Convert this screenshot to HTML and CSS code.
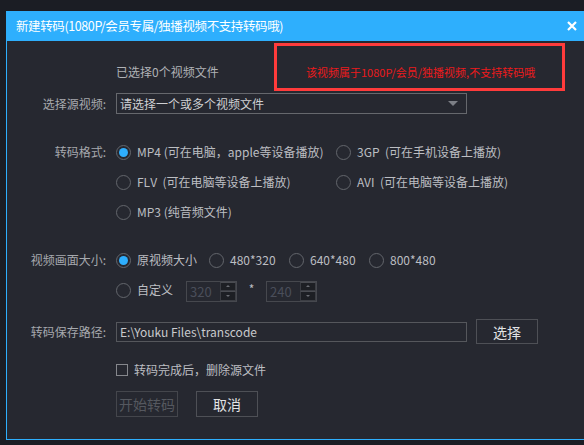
FILE: index.html
```html
<!DOCTYPE html>
<html lang="zh-CN">
<head>
<meta charset="utf-8">
<title>新建转码</title>
<link rel="stylesheet" href="styles.css">
</head>
<body>
<div class="screen">
  <div class="dialog">
    <div class="titlebar">
      <span class="title">新建转码(1080P/会员专属/独播视频不支持转码哦)</span>
      <svg class="close" width="10" height="10" viewBox="0 0 10 10"><path d="M1 1L9 9M9 1L1 9" stroke="#fff" stroke-width="2.2" fill="none"/></svg>
    </div>
    <div class="body">
      <div class="field row-top">
        <div class="label"></div>
        <div class="top-line">
          <div class="count">已选择0个视频文件</div>
          <div class="warning">该视频属于1080P/会员/独播视频,不支持转码哦</div>
        </div>
      </div>

      <div class="field row-source">
        <div class="label">选择源视频:</div>
        <div class="select">
          <span class="select-text">请选择一个或多个视频文件</span>
          <span class="caret"></span>
        </div>
      </div>

      <div class="field row-format">
        <div class="label label-first">转码格式:</div>
        <div class="format-grid">
          <div class="opt"><span class="radio on"></span><span>MP4 (可在电脑，apple等设备播放)</span></div>
          <div class="opt"><span class="radio"></span><span>3GP&nbsp; (可在手机设备上播放)</span></div>
          <div class="opt"><span class="radio"></span><span>FLV&nbsp; (可在电脑等设备上播放)</span></div>
          <div class="opt"><span class="radio"></span><span>AVI&nbsp; (可在电脑等设备上播放)</span></div>
          <div class="opt"><span class="radio"></span><span>MP3 (纯音频文件)</span></div>
        </div>
      </div>

      <div class="field row-size">
        <div class="label label-first">视频画面大小:</div>
        <div class="size-rows">
          <div class="size-line">
            <div class="opt w93"><span class="radio on"></span><span>原视频大小</span></div>
            <div class="opt w80"><span class="radio"></span><span>480*320</span></div>
            <div class="opt w80"><span class="radio"></span><span>640*480</span></div>
            <div class="opt"><span class="radio"></span><span>800*480</span></div>
          </div>
          <div class="size-line">
            <div class="opt custom"><span class="radio"></span><span>自定义</span></div>
            <div class="spin">
              <span class="spin-val">320</span>
              <span class="spin-btns"><span class="spin-btn up"></span><span class="spin-btn down"></span></span>
            </div>
            <span class="star">*</span>
            <div class="spin">
              <span class="spin-val">240</span>
              <span class="spin-btns"><span class="spin-btn up"></span><span class="spin-btn down"></span></span>
            </div>
          </div>
        </div>
      </div>

      <div class="field row-path">
        <div class="label">转码保存路径:</div>
        <div class="path-line">
          <div class="input">E:\Youku Files\transcode</div>
          <div class="btn">选择</div>
        </div>
      </div>

      <div class="field row-check">
        <div class="label"></div>
        <div class="check-line"><span class="checkbox"></span><span>转码完成后，删除源文件</span></div>
      </div>

      <div class="field row-buttons">
        <div class="label"></div>
        <div class="button-line">
          <div class="btn disabled">开始转码</div>
          <div class="btn">取消</div>
        </div>
      </div>
    </div>
  </div>
</div>
</body>
</html>
```

FILE: styles.css
```css
html, body {
  margin: 0;
  padding: 0;
}
body {
  width: 584px;
  height: 445px;
  overflow: hidden;
  background: #1b1d24;
  font-family: "Noto Sans CJK SC", "Noto Sans", sans-serif;
}
.screen {
  padding: 11px 0 0 6px;
}
.dialog {
  width: 580px;
  box-sizing: border-box;
  border: 1px solid #2eaffd;
  background: #262830;
}
.titlebar {
  height: 29px;
  background: #2eaffd;
  display: flex;
  align-items: center;
  justify-content: space-between;
  padding: 0 8px 0 9px;
}
.title {
  color: #ffffff;
  font-size: 12.5px;
  line-height: 16px;
  letter-spacing: -0.4px;
  margin-top: -2px;
}
.close {
  display: block;
  margin-top: -2px;
}
.body {
  height: 398px;
  display: flex;
  flex-direction: column;
}
.field {
  display: grid;
  grid-template-columns: 100px 1fr;
  column-gap: 9px;
}
.label {
  text-align: right;
  padding-right: 1px;
  color: #a6a9ae;
  font-size: 12px;
  line-height: 16px;
  align-self: center;
}
.label-first {
  align-self: start;
  margin-top: 7px;
}

/* top row */
.row-top {
  margin-top: 2px;
  height: 48px;
}
.top-line {
  display: flex;
  align-items: flex-start;
}
.count {
  width: 158px;
  margin-top: 21px;
  color: #b0b2b6;
  font-size: 12px;
  line-height: 16px;
}
.warning {
  width: 291px;
  height: 48px;
  box-sizing: border-box;
  border: 3px solid #ff3b3b;
  padding: 18px 0 0 29px;
  color: #ec1a1c;
  font-size: 11px;
  line-height: 16px;
  letter-spacing: 0;
  white-space: nowrap;
}

/* source select */
.row-source {
  margin-top: 2px;
  height: 21px;
}
.select {
  width: 351px;
  height: 21px;
  box-sizing: border-box;
  border: 1px solid #66686d;
  display: flex;
  align-items: center;
  justify-content: space-between;
  padding: 0 8px 0 3px;
}
.select-text {
  color: #cfd0d3;
  font-size: 12px;
  line-height: 16px;
}
.caret {
  width: 0;
  height: 0;
  border-left: 5px solid transparent;
  border-right: 5px solid transparent;
  border-top: 5px solid #7c7f86;
}

/* options */
.opt {
  display: flex;
  align-items: center;
  gap: 6px;
  color: #bcbec2;
  font-size: 12px;
  line-height: 16px;
  white-space: nowrap;
}
.radio {
  flex: none;
  width: 15px;
  height: 15px;
  box-sizing: border-box;
  border-radius: 50%;
  border: 1.5px solid #63666c;
  display: flex;
  align-items: center;
  justify-content: center;
}
.radio.on::after {
  content: "";
  width: 9px;
  height: 9px;
  border-radius: 50%;
  background: #2eaefd;
}
.row-format {
  margin-top: 23px;
}
.format-grid {
  display: grid;
  grid-template-columns: 220px auto;
  grid-auto-rows: 30px;
  align-items: center;
}

/* size */
.row-size {
  margin-top: 18px;
}
.size-rows {
  display: flex;
  flex-direction: column;
}
.size-line {
  height: 30px;
  display: flex;
  align-items: center;
}
.w93 { width: 93px; }
.w80 { width: 80px; }
.custom { width: 70px; }
.spin {
  width: 51px;
  height: 21px;
  box-sizing: border-box;
  border: 1px solid #46484e;
  display: flex;
  margin-top: 2px;
}
.spin-val {
  flex: 1;
  color: #4a4e5a;
  font-size: 13px;
  line-height: 19px;
  padding-left: 3px;
}
.spin-btns {
  width: 16px;
  display: flex;
  flex-direction: column;
}
.spin-btn {
  flex: 1;
  background: #1d1f24;
  border: 1px solid #3b3d43;
  border-top-color: #4a4c52;
  display: flex;
  align-items: center;
  justify-content: center;
}
.spin-btn::after {
  content: "";
  width: 0;
  height: 0;
  border-left: 2px solid transparent;
  border-right: 2px solid transparent;
}
.spin-btn.up::after {
  border-bottom: 2px solid #6a6d73;
}
.spin-btn.down::after {
  border-top: 2px solid #6a6d73;
}
.star {
  width: 29px;
  text-align: center;
  color: #b9bbc0;
  font-size: 12px;
  line-height: 16px;
  margin-top: -3px;
}

/* path */
.row-path {
  margin-top: 14px;
  height: 25px;
}
.path-line {
  display: flex;
  align-items: center;
  gap: 9px;
}
.input {
  width: 351px;
  height: 20px;
  box-sizing: border-box;
  border: 1px solid #55575c;
  padding-left: 3px;
  color: #c9cacd;
  font-size: 12px;
  line-height: 18px;
}
.btn {
  width: 62px;
  height: 25px;
  box-sizing: border-box;
  border: 1px solid #4e5056;
  display: flex;
  align-items: center;
  justify-content: center;
  color: #e2e3e5;
  font-size: 14px;
  line-height: 16px;
}

/* checkbox */
.row-check {
  margin-top: 18px;
  height: 16px;
}
.check-line {
  display: flex;
  align-items: center;
  gap: 6px;
  color: #bcbec2;
  font-size: 12px;
  line-height: 16px;
}
.checkbox {
  width: 12px;
  height: 12px;
  box-sizing: border-box;
  border: 1px solid #85878c;
}

/* buttons */
.row-buttons {
  margin-top: 13px;
}
.button-line {
  display: flex;
  gap: 18px;
}
.button-line .btn {
  height: 26px;
}
.btn.disabled {
  color: #55585f;
  border-color: #44464c;
}
```
